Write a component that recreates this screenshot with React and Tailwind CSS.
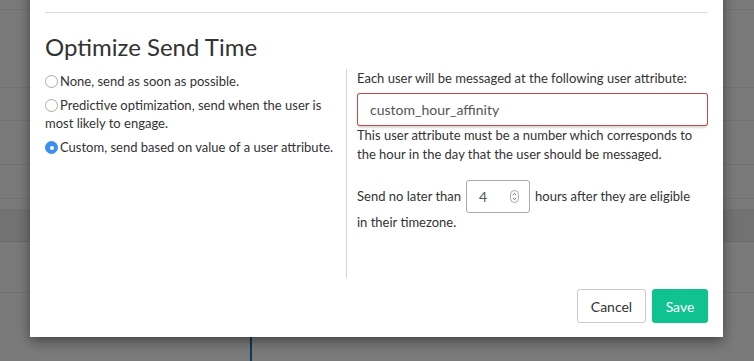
export default function App() {
  const font = { fontFamily: 'Lato, "Liberation Sans", sans-serif' };
  return (
    <div className="relative w-[754px] h-[361px] overflow-hidden bg-[#7a7a7a]" style={font}>
      {/* underlying page, dimmed */}
      <div className="absolute inset-0 flex flex-col">
        <div className="h-[10px] border-b border-[#717171]" />
        <div className="h-[78px] border-b border-[#717171]" />
        <div className="h-[33px] border-b border-[#717171]" />
        <div className="h-[44px] border-b border-[#717171]" />
        <div className="h-[34px] border-b border-[#717171]" />
        <div className="h-[10px]" />
        <div className="h-[33px] bg-[#727272] border-b border-[#6a6a6a]" />
        <div className="h-[51px] border-b border-[#717171]" />
        <div className="flex-1 flex">
          <div className="w-[250px]" />
          <div className="w-[2px] bg-[#0d3a5a]" />
        </div>
      </div>

      {/* modal */}
      <div className="absolute left-[30px] top-[-20px] w-[693px] h-[357px] bg-white shadow-[0_4px_12px_rgba(0,0,0,0.45)] px-[15px]">
        <div className="mt-[32px] border-t border-[#dcdcdc]" />
        <h2 className="mt-[20px] text-[24px] leading-[28px] text-[#333]">Optimize Send Time</h2>

        <div className="mt-[8px] flex text-[13px] text-[#333]">
          <div className="w-[301px] pr-[8px] flex flex-col gap-[6px] pt-[3px]">
            <Radio label="None, send as soon as possible." />
            <Radio label="Predictive optimization, send when the user is most likely to engage." />
            <Radio checked label="Custom, send based on value of a user attribute." />
          </div>

          <div className="flex-1 border-l border-[#d4d4d4] pl-[10px] h-[209px]">
            <p className="leading-[18px]">Each user will be messaged at the following user attribute:</p>
            <div className="mt-[6px] rounded-[3px] bg-[#c44a49] p-px shadow-[0_3px_2px_-1px_rgba(0,0,0,0.15)]">
              <div className="h-[31px] rounded-[2px] bg-white flex items-center px-[12px] text-[14px] text-[#555]">
                custom_hour_affinity
              </div>
            </div>
            <p className="leading-[19px]">
              This user attribute must be a number which corresponds to the hour in the day that the user should be messaged.
            </p>
            <div className="mt-[16px] flex items-center h-[33px]">
              <span>Send no later than</span>
              <div className="mx-[5px] w-[64px] h-[33px] border border-[#aaa] rounded-[3px] flex items-center justify-between pl-[12px] pr-[10px] text-[14px] text-[#555]">
                <span>4</span>
                <svg width="9" height="13" viewBox="0 0 9 13">
                  <rect x="0.5" y="0.5" width="8" height="12" rx="4" fill="#fff" stroke="#aaa" />
                  <path d="M2.8 5 L4.5 3.4 L6.2 5" fill="none" stroke="#555" strokeWidth="0.9" />
                  <path d="M2.8 8 L4.5 9.6 L6.2 8" fill="none" stroke="#555" strokeWidth="0.9" />
                </svg>
              </div>
              <span>hours after they are eligible</span>
            </div>
            <p className="leading-[18px]">in their timezone.</p>
          </div>
        </div>

        <div className="mt-[11px] flex justify-end gap-[6px]">
          <button className="h-[34px] w-[69px] border border-[#ccc] rounded-[3px] text-[14px] text-[#333] bg-white">Cancel</button>
          <button className="h-[34px] w-[56px] rounded-[3px] text-[14px] text-white bg-[#10c28f]">Save</button>
        </div>
      </div>
    </div>
  );
}

function Radio({ label, checked }) {
  return (
    <div className="leading-[18px]">
      <span
        className={`inline-block align-[-2px] w-[13px] h-[13px] rounded-full mr-[2px] ${
          checked ? 'bg-[#3a8ff0] border border-[#3a8ff0] relative' : 'border border-[#aaa] bg-white'
        }`}
      >
        {checked && <span className="absolute left-[3.5px] top-[3.5px] w-[4px] h-[4px] rounded-full bg-white" />}
      </span>
      {label}
    </div>
  );
}
